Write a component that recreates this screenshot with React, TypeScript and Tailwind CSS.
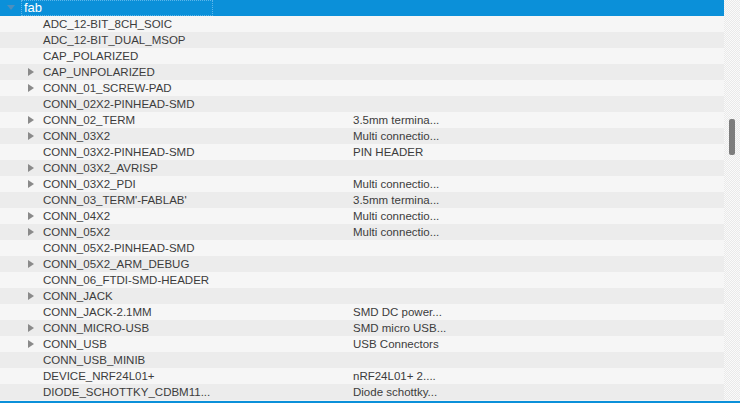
const rows: { name: string; arrow?: boolean; desc?: string }[] = [
  { name: "ADC_12-BIT_8CH_SOIC" },
  { name: "ADC_12-BIT_DUAL_MSOP" },
  { name: "CAP_POLARIZED" },
  { name: "CAP_UNPOLARIZED", arrow: true },
  { name: "CONN_01_SCREW-PAD", arrow: true },
  { name: "CONN_02X2-PINHEAD-SMD" },
  { name: "CONN_02_TERM", arrow: true, desc: "3.5mm termina..." },
  { name: "CONN_03X2", arrow: true, desc: "Multi connectio..." },
  { name: "CONN_03X2-PINHEAD-SMD", desc: "PIN HEADER" },
  { name: "CONN_03X2_AVRISP", arrow: true },
  { name: "CONN_03X2_PDI", arrow: true, desc: "Multi connectio..." },
  { name: "CONN_03_TERM'-FABLAB'", desc: "3.5mm termina..." },
  { name: "CONN_04X2", arrow: true, desc: "Multi connectio..." },
  { name: "CONN_05X2", arrow: true, desc: "Multi connectio..." },
  { name: "CONN_05X2-PINHEAD-SMD" },
  { name: "CONN_05X2_ARM_DEBUG", arrow: true },
  { name: "CONN_06_FTDI-SMD-HEADER" },
  { name: "CONN_JACK", arrow: true },
  { name: "CONN_JACK-2.1MM", desc: "SMD DC power..." },
  { name: "CONN_MICRO-USB", arrow: true, desc: "SMD micro USB..." },
  { name: "CONN_USB", arrow: true, desc: "USB Connectors" },
  { name: "CONN_USB_MINIB" },
  { name: "DEVICE_NRF24L01+", desc: "nRF24L01+ 2...." },
  { name: "DIODE_SCHOTTKY_CDBM11...", desc: "Diode schottky..." },
];

export default function App() {
  return (
    <div className="flex h-[403px] w-[740px] flex-col overflow-hidden bg-white font-['Liberation_Sans',Arial,sans-serif] text-[11.5px] text-[#3c3c3c]">
      <div className="flex min-h-0 flex-1">
        {/* tree */}
        <div className="flex w-[724px] flex-col">
          {/* root: fab */}
          <div className="flex h-4 items-center bg-[#0b90d9]">
            <div className="flex w-[21px] items-center justify-center">
              <span className="mb-px h-0 w-0 border-x-[4px] border-t-[5px] border-x-transparent border-t-[#4d8fbd]" />
            </div>
            <div className="flex h-4 w-[192px] items-center border border-dotted border-[#5cb6ea] pl-[2px] text-[13px] leading-4 text-white">
              fab
            </div>
          </div>
          {rows.map((r, i) => (
            <div
              key={r.name}
              className={`flex h-4 items-center leading-4 ${i % 2 === 0 ? "bg-[#f6f6f6]" : "bg-[#ececec]"}`}
            >
              <div className="flex w-[43px] items-center justify-end pr-[9px]">
                {r.arrow && (
                  <span className="h-0 w-0 border-y-[4px] border-l-[6px] border-y-transparent border-l-[#8a8a8a]" />
                )}
              </div>
              <div className="w-[310px] whitespace-nowrap">{r.name}</div>
              <div className="flex-1 whitespace-nowrap">{r.desc}</div>
            </div>
          ))}
        </div>
        {/* scrollbar */}
        <div className="relative flex-1 bg-[repeating-conic-gradient(#e9e9e9_0%_25%,#fafafa_0%_50%)] bg-[length:2px_2px]">
          <div className="absolute left-[5px] top-[119px] h-[36px] w-[6px] rounded-[2px] bg-[#7d7d7d]" />
        </div>
      </div>
      <div className="h-px bg-[#f4f4f4]" />
      <div className="h-[2px] bg-[#0b90d9]" />
    </div>
  );
}
